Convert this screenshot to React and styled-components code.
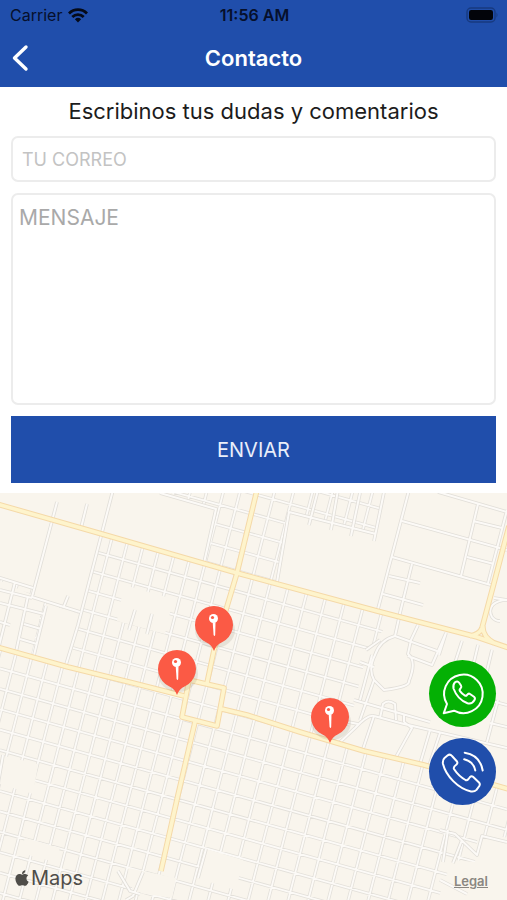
import React from "react";
import styled, { createGlobalStyle } from "styled-components";
import { FaApple } from "react-icons/fa";

const GlobalStyle = createGlobalStyle`
  *, *::before, *::after { box-sizing: border-box; }
  body { margin: 0; background: #fff; }
  body, input, textarea, button { font-family: Inter, "Liberation Sans", sans-serif; }
`;

const BLUE = "#204eab";
const LAND = "#f9f5ed";

const Page = styled.div`
  display: flex;
  flex-direction: column;
  min-height: 100vh;
`;

const Header = styled.header`
  background: ${BLUE};
`;

const StatusBar = styled.div`
  display: grid;
  grid-template-columns: 1fr auto 1fr;
  align-items: center;
  height: 30px;
  padding: 0 8px 0 10px;
  color: #06102b;
  font-size: 16px;
  line-height: 20px;
`;

const Carrier = styled.div`
  display: flex;
  align-items: center;
  gap: 6px;
`;

const Clock = styled.time`
  font-weight: 600;
`;

const BatteryIcon = styled.svg`
  justify-self: end;
`;

const NavBar = styled.nav`
  display: grid;
  grid-template-columns: 1fr auto 1fr;
  align-items: center;
  height: 57px;
  padding: 0 11px 2px;
`;

const BackButton = styled.button`
  display: flex;
  padding: 0;
  border: 0;
  background: none;
  cursor: pointer;
`;

const Title = styled.h1`
  margin: 0;
  color: #fff;
  font-size: 22px;
  line-height: 28px;
  font-weight: 600;
`;

const Form = styled.form`
  display: flex;
  flex-direction: column;
  gap: 11px;
  padding: 10px 11px;
`;

const Heading = styled.h2`
  margin: 0 0 -1px;
  color: #1c1c1c;
  font-size: 22px;
  line-height: 29px;
  font-weight: 400;
  text-align: center;
`;

const EmailField = styled.input`
  width: 100%;
  height: 46px;
  padding: 0 9px;
  border: 2px solid #ececec;
  border-radius: 7px;
  color: #1c1c1c;
  font-size: 18px;
  &::placeholder { color: #c3c3c3; opacity: 1; }
`;

const MessageField = styled.textarea`
  display: block;
  width: 100%;
  height: 212px;
  padding: 9px 6px;
  border: 2px solid #ececec;
  border-radius: 7px;
  resize: none;
  color: #1c1c1c;
  font-size: 21px;
  line-height: 28px;
  &::placeholder { color: #a9a9a9; opacity: 1; }
`;

const SubmitButton = styled.button`
  height: 67px;
  border: 0;
  background: ${BLUE};
  color: #e9eefa;
  font-size: 20px;
  cursor: pointer;
`;

const MapSection = styled.section`
  position: relative;
  flex: 1;
  min-height: 400px;
  overflow: hidden;
  background: ${LAND};
`;

const MapCanvas = styled.svg`
  position: absolute;
  inset: 0;
  width: 100%;
  height: 100%;
`;

const MapBrand = styled.div`
  position: absolute;
  left: 13px;
  bottom: 8px;
  display: flex;
  align-items: center;
  color: #4f4d49;
  font-size: 20px;
  line-height: 28px;
`;

const LegalLink = styled.a`
  position: absolute;
  right: 19px;
  bottom: 11px;
  color: #8a8781;
  font-size: 13px;
  line-height: 16px;
  font-weight: 600;
`;

const Actions = styled.div`
  position: absolute;
  right: 11px;
  bottom: 95px;
  display: flex;
  flex-direction: column;
  gap: 11px;
`;

const RoundLink = styled.a`
  display: block;
  width: 67px;
  height: 67px;
  border-radius: 50%;
  background: ${({ $color }) => $color};
`;

const LineIcon = styled.svg`
  display: block;
  width: 100%;
  height: 100%;
  fill: none;
  stroke: #fff;
  stroke-width: 2;
  stroke-linecap: round;
  stroke-linejoin: round;
`;

const range = (n) => Array.from({ length: n }, (_, i) => i);

/* Street grid: rows run down to the right, columns lean to the left. */
const rows = range(29).map((i) => {
  const y = 362 + 20.43 * i;
  return `M0 ${y}L507 ${y + 141}`;
});
const columnAnchors = [
  ...range(15).map((i) => 197 - 16.6 * i),
  215, 234, 253,
  ...range(18).map((i) => 273 + 20 * i),
];
const columns = columnAnchors.map((x) => `M${x + 60} 490L${x - 46} 905`);
const GRID = [...rows, ...columns].join("");

const OPEN_BLOCKS = [
  "M-4 490H160L216 508L204 563L-4 504Z",
  "M-4 507L50 521L33 589L-4 579Z",
  "M52 522L100 536L81 613L34 598Z",
  "M46 604L80 614L69 666L36 656Z",
  "M-4 579L44 600L31 655L-4 645Z",
  "M124 585L173 599L165 634L117 621Z",
  "M289 513L376 535L384 490H512V652L277 583Z",
  "M392 617L512 650V789L345 744L366 655Z",
  "M4 756L38 764L33 794L0 784Z",
  "M25 838L60 848L55 862L20 853Z",
  "M206 849L243 860L236 890L199 879Z",
  "M478 834L512 838V905H436L452 860L475 862Z",
  "M128 868L176 878L172 898L133 892Z",
].join("");

const SIDE_STREETS = [
  "M57 502L32 597",
  "M87 504L81 528",
  "M113 490L78 625L65 668",
  "M-3 577L33 588",
  "M32 597L80 612",
  "M68 596L64 606",
  "M0 590L32 598M0 603L44 614M24 624L41 629M20 639L37 644M0 622L10 625",
  "M46 606L34 655",
  "M28 596L16 652",
  "M15 582L-2 650",
  "M135 610L129 630M152 614L147 634",
  "M160 493L216 509L204 563",
  "M289 512L277 582",
  "M384 492L374 541M360 493L351 536M338 490L331 530M318 490L309 525",
  "M289 512L376 534",
  "M409 490L378 609",
  "M438 492L507 512",
  "M402 521L507 550M392 557L491 585",
  "M478 504L461 576M507 510L488 583M473 521L502 528M467 557L494 564",
  "M412 564L399 617M389 576L420 583M383 594L423 605",
  "M507 600L494 598M511 600C493 599 487 608 492 617Q495 621 500 621",
  "M399 618L395 636Q380 640 375 655Q368 669 374 680L384 690Q410 687 409 681Q417 661 408 654L411 640L418 625",
  "M395 636L437 651M408 656L432 665L446 633M446 633L439 655",
  "M462 641L452 672M478 645L465 700",
  "M366 650L380 640M372 655L360 700M374 680L360 720M360 662L374 667",
  "M337 745L355 728Q368 714 374 716L404 724L507 748",
  "M354 700L430 722M348 722L358 724",
  "M380 718L383 704Q388 699 395 704L396 720",
  "M374 716L362 752M404 722L412 728L396 757M430 730L420 764M440 733L429 766M404 722L404 714",
  "M440 830L455 834L477 855L482 836L507 842",
  "M462 840L453 863M448 830L443 862M440 880L467 894",
  "M3 755L-2 784M206 849L198 878",
  "M492 650L480 700M507 705L480 698M498 700L487 742M507 727L490 723",
  "M118 871L130 891L140 894M143 872L133 896L126 900",
].join("");

const AVENUES = [
  "M-3 504L102 534L237 573L377 611L477 637L512 649",
  "M257 490L237 573L214 650L207 683",
  "M-3 647L68 667L133 683L184 696",
  "M189 680L224 688L217 726L182 717Z",
  "M222 709L247 715L300 732L364 751L424 765L512 790",
  "M195 722L178 795L161 871",
  "M509 526L494 583L482 628Q480 634 470 636M483 626Q482 636 494 643",
].join("");

const PINS = [
  { x: 214, y: 625 },
  { x: 177, y: 669 },
  { x: 330, y: 717 },
];

function Pin({ x, y }) {
  return (
    <g transform={`translate(${x} ${y})`}>
      <ellipse cx="1" cy="5" rx="20" ry="18" fill="#6b6250" opacity="0.13" />
      <path d="M0 26Q-2 20 -8 17.200A19 19 0 1 1 8 17.200Q2 20 0 26Z" fill="#fb5a45" />
      <circle cx="-0.500" cy="-6.500" r="4.500" fill="#fff" />
      <circle cx="-1.500" cy="-7.500" r="1.600" fill="#fb5a45" />
      <path d="M-1.300 -2.500H1.500L1.200 10Q0.400 12 -0.400 10Z" fill="#fff" />
    </g>
  );
}

function StreetMap() {
  return (
    <MapCanvas viewBox="0 493 507 407" preserveAspectRatio="xMidYMid slice" role="img" aria-label="Mapa de sucursales">
      <g fill="none" strokeLinejoin="round">
        <path d={GRID} stroke="#e3e0da" strokeWidth="3.400" />
        <path d={GRID} stroke="#fcfaf7" strokeWidth="1.800" />
        <path d={OPEN_BLOCKS} fill={LAND} />
        <path d={SIDE_STREETS} stroke="#e1ded8" strokeWidth="3.600" />
        <path d={SIDE_STREETS} stroke="#fcfaf7" strokeWidth="2" />
        <path d={AVENUES} stroke="#f5d9a8" strokeWidth="5.600" />
        <path d={AVENUES} stroke="#fef4cc" strokeWidth="3.600" />
      </g>
      {PINS.map((pin) => (
        <Pin key={pin.x} {...pin} />
      ))}
    </MapCanvas>
  );
}

export default function App() {
  return (
    <Page>
      <GlobalStyle />
      <Header>
        <StatusBar>
          <Carrier>
            <span>Carrier</span>
            <svg width="20" height="15" viewBox="0 0 20 15" fill="none" stroke="#050a18" strokeWidth="2.800" aria-hidden="true">
              <path d="M1 5.400C6 0.400 14 0.400 19 5.400" />
              <path d="M4.300 8.900C7.500 5.800 12.500 5.800 15.700 8.900" />
              <path d="M6.900 11.200Q10 8.500 13.100 11.200L10 14.500Z" fill="#050a18" stroke="none" />
            </svg>
          </Carrier>
          <Clock>11:56 AM</Clock>
          <BatteryIcon width="33" height="16" viewBox="0 0 33 16" aria-hidden="true">
            <rect x="1" y="1" width="28" height="14" rx="4" fill="none" stroke="#173a80" strokeWidth="1.400" />
            <rect x="3" y="3" width="24" height="10" rx="2.200" fill="#02040a" />
            <path d="M30.500 5.500Q32.500 8 30.500 10.500Z" fill="#173a80" />
          </BatteryIcon>
        </StatusBar>
        <NavBar>
          <BackButton type="button" aria-label="Volver">
            <svg width="18" height="28" viewBox="0 0 18 28" fill="none" stroke="#fff" strokeWidth="3.400" strokeLinecap="round" strokeLinejoin="round">
              <path d="M15 3L3.500 14L15 25" />
            </svg>
          </BackButton>
          <Title>Contacto</Title>
        </NavBar>
      </Header>

      <Form onSubmit={(e) => e.preventDefault()}>
        <Heading>Escribinos tus dudas y comentarios</Heading>
        <EmailField type="email" placeholder="TU CORREO" aria-label="Tu correo" />
        <MessageField placeholder="MENSAJE" aria-label="Mensaje" />
        <SubmitButton type="submit">ENVIAR</SubmitButton>
      </Form>

      <MapSection>
        <StreetMap />
        <MapBrand>
          <FaApple size={18} aria-hidden="true" />
          <span>Maps</span>
        </MapBrand>
        <LegalLink href="#legal">Legal</LegalLink>
        <Actions>
          <RoundLink href="#whatsapp" $color="#04b004" aria-label="WhatsApp">
            <LineIcon viewBox="0 0 67 67">
              <path d="M18 44A19.300 19.300 0 1 1 25 50.700L14.700 53.300Z" />
              <path d="M26 22.300Q28.500 20.500 30 22.500L32 25.500Q33 27 31.500 28.500Q30 30 31 31.200Q33 34 36 35.700Q37 36.200 38 35Q39.500 33 41 34L45 36.800Q46.600 38 45.500 40Q43 44.500 38.500 43.300Q28.500 39.500 24.500 28.500Q23.800 24.500 26 22.300Z" />
            </LineIcon>
          </RoundLink>
          <RoundLink href="#telefono" $color={BLUE} aria-label="Llamar">
            <LineIcon viewBox="0 0 67 67">
              <path d="M15.500 20L18.500 17.500Q21 15.500 23 18L28 23.500Q29 25 27.500 26.500Q24 29 25 31Q29.500 38 36.500 42Q38 42.700 39.500 41L41 39Q42.500 37.500 44 38.800L50 44.500Q51.500 46 50.300 48L47.500 51.800Q45.500 54 42 53.500C29 50.500 17 38 14 26Q13.300 22 15.500 20Z" />
              <path d="M35.700 14.700Q51 17 53.700 32.500" />
              <path d="M35.200 21.300Q44.500 23.500 46.300 32.500" />
            </LineIcon>
          </RoundLink>
        </Actions>
      </MapSection>
    </Page>
  );
}
